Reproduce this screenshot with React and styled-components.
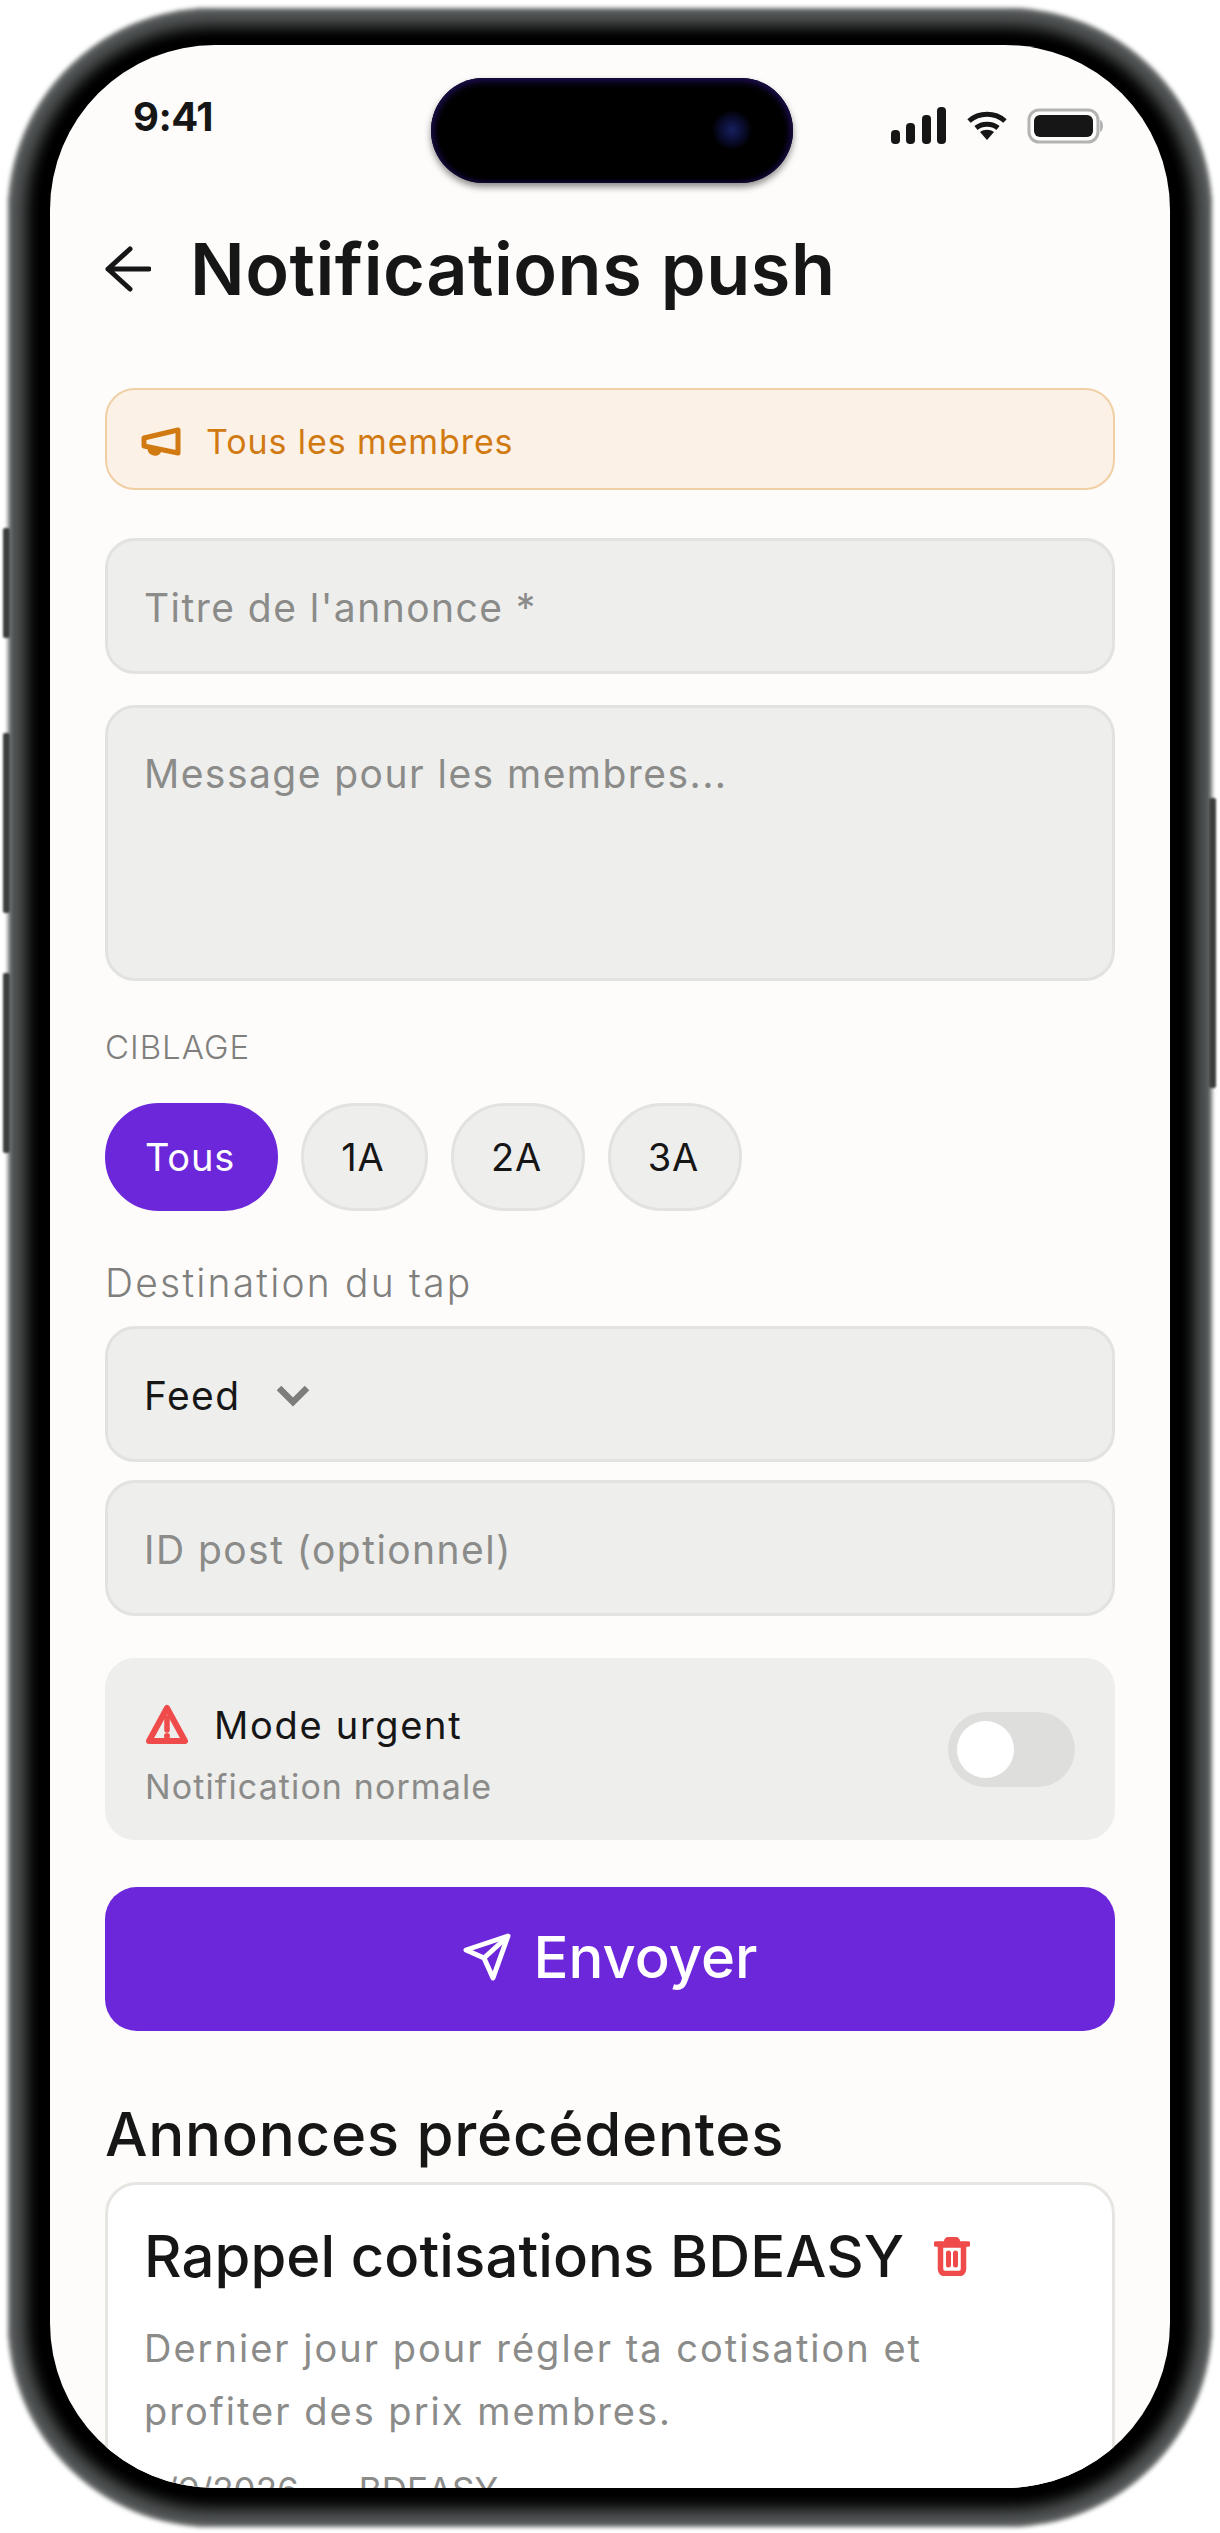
import React from "react";
import styled, { createGlobalStyle } from "styled-components";

const GlobalStyle = createGlobalStyle`
  html, body { margin: 0; padding: 0; background: #fff; }
  body { font-family: "Inter", "Liberation Sans", sans-serif; }
  #root { width: 1220px; height: 2533px; overflow: hidden; }
`;

const Stage = styled.div`
  width: 1220px;
  height: 2533px;
  padding: 8px;
  box-sizing: border-box;
`;

const Phone = styled.div`
  position: relative;
  width: 1204px;
  height: 2519px;
  box-sizing: border-box;
  padding: 37px 42px 39px 42px;
  border-radius: 205px;

  &::before {
    content: "";
    position: absolute;
    inset: 0;
    border-radius: 205px;
    background: #000;
    box-shadow: inset 0 0 0 4px #676a6a, inset 0 0 14px 18px #525555;
    filter: blur(2px);
  }
`;

const SideKey = styled.span`
  position: absolute;
  top: ${(p) => p.$top}px;
  ${(p) => (p.$right ? "right: -4px;" : "left: -5px;")}
  width: 7px;
  height: ${(p) => p.$height}px;
  border-radius: 2px;
  background: #3c3e3e;
  filter: blur(1px);
`;

const Screen = styled.div`
  position: relative;
  height: 100%;
  overflow: hidden;
  border-radius: 165px;
  background: #fdfcfa;
  box-shadow: 0 0 7px 2px rgba(0, 0, 0, 0.55);
  display: flex;
  flex-direction: column;
`;

const Island = styled.div`
  position: absolute;
  top: 33px;
  left: 381px;
  width: 362px;
  height: 105px;
  border-radius: 53px;
  background: #000;
  box-shadow: inset 0 3px 8px #1d0f4a, inset 3px 0 6px #150a38, inset -3px 0 6px #150a38, 0 4px 7px rgba(0, 0, 0, 0.45);
`;

const Camera = styled.span`
  position: absolute;
  top: 32px;
  right: 41px;
  width: 40px;
  height: 40px;
  border-radius: 50%;
  background: radial-gradient(circle, #16205e 0%, #0b0d30 40%, #000 72%);
`;

const StatusBar = styled.div`
  height: 116px;
  flex: none;
  box-sizing: border-box;
  padding: 48px 65px 0 83px;
  display: flex;
  justify-content: space-between;
  align-items: flex-start;
`;

const Clock = styled.span`
  font-size: 40px;
  line-height: 48px;
  font-weight: 700;
  color: #161616;
  letter-spacing: -0.5px;
`;

const StatusIcons = styled.div`
  margin-top: 14px;
  display: flex;
  align-items: center;
  gap: 20px;
`;

const Content = styled.div`
  padding: 0 55px;
  display: flex;
  flex-direction: column;
`;

const Header = styled.div`
  height: 76px;
  margin-top: 70px;
  display: flex;
  align-items: center;
  gap: 39px;
`;

const Title = styled.h1`
  margin: 0;
  font-size: 72px;
  line-height: 76px;
  font-weight: 600;
  letter-spacing: 0.5px;
  color: #161616;
`;

const Banner = styled.div`
  height: 102px;
  margin-top: 81px;
  box-sizing: border-box;
  padding: 5px 34px 0;
  display: flex;
  align-items: center;
  gap: 25px;
  border: 2px solid #f0cfa4;
  border-radius: 30px;
  background: #fbf1e6;
  font-size: 34px;
  letter-spacing: 0.9px;
  color: #d17a12;
`;

const Field = styled.div`
  height: ${(p) => p.$height || 136}px;
  margin-top: ${(p) => p.$gap || 0}px;
  box-sizing: border-box;
  padding: ${(p) => (p.$multi ? "44px" : "3px")} 36px 0;
  display: flex;
  align-items: ${(p) => (p.$multi ? "flex-start" : "center")};
  gap: 35px;
  border: 3px solid #e2e2e0;
  border-radius: 30px;
  background: #eeeeed;
  font-size: 39px;
  line-height: 44px;
  letter-spacing: 1.45px;
  color: ${(p) => (p.$filled ? "#161616" : "#8b8b89")};
`;

const Caption = styled.div`
  margin-top: ${(p) => p.$gap}px;
  font-size: ${(p) => p.$size}px;
  line-height: ${(p) => p.$size + 6}px;
  font-weight: 300;
  color: #7f7f7d;
  letter-spacing: ${(p) => p.$spacing}px;
`;

const Chips = styled.div`
  margin-top: 36px;
  display: flex;
  gap: 23px;
`;

const Chip = styled.div`
  height: 108px;
  width: ${(p) => p.$width}px;
  box-sizing: border-box;
  padding-right: 3px;
  display: flex;
  align-items: center;
  justify-content: center;
  border-radius: 54px;
  border: 3px solid ${(p) => (p.$active ? "#6b27d9" : "#e2e2e0")};
  background: ${(p) => (p.$active ? "#6b27d9" : "#eeeeed")};
  color: ${(p) => (p.$active ? "#fff" : "#161616")};
  font-size: 38px;
  letter-spacing: 0.8px;
`;

const UrgentCard = styled.div`
  height: 182px;
  margin-top: 42px;
  box-sizing: border-box;
  padding: 0 40px;
  display: flex;
  align-items: center;
  justify-content: space-between;
  border-radius: 30px;
  background: #eeeeed;
`;

const UrgentText = styled.div`
  padding-top: 10px;
`;

const UrgentTop = styled.div`
  display: flex;
  align-items: center;
  gap: 25px;
  font-size: 38px;
  line-height: 46px;
  color: #161616;
  letter-spacing: 1.7px;
`;

const UrgentSub = styled.div`
  margin-top: 19px;
  font-size: 34px;
  line-height: 40px;
  letter-spacing: 1.1px;
  color: #8b8b89;
`;

const Toggle = styled.div`
  width: 127px;
  height: 75px;
  box-sizing: border-box;
  padding: 9px;
  border-radius: 38px;
  background: #dededd;
`;

const Knob = styled.div`
  width: 57px;
  height: 57px;
  border-radius: 50%;
  background: #fff;
`;

const SendButton = styled.div`
  height: 144px;
  margin-top: 47px;
  box-sizing: border-box;
  padding-bottom: 5px;
  display: flex;
  align-items: center;
  justify-content: center;
  gap: 23px;
  border-radius: 32px;
  background: #6b27d9;
  color: #fff;
  font-size: 58px;
  font-weight: 500;
`;

const SectionTitle = styled.h2`
  margin: 69px 0 0;
  font-size: 60px;
  line-height: 68px;
  font-weight: 500;
  letter-spacing: 0.7px;
  color: #161616;
`;

const PostCard = styled.div`
  margin-top: 14px;
  box-sizing: border-box;
  padding: 35px 36px 40px;
  border: 3px solid #e6e5e2;
  border-radius: 32px;
  background: #fff;
`;

const PostHead = styled.div`
  display: flex;
  align-items: center;
  gap: 30px;
`;

const PostTitle = styled.div`
  font-size: 58px;
  line-height: 72px;
  font-weight: 500;
  letter-spacing: 0.1px;
  color: #161616;
`;

const PostBody = styled.p`
  max-width: 850px;
  margin: 25px 0 0;
  font-size: 38px;
  line-height: 63px;
  letter-spacing: 2px;
  color: #8b8b89;
`;

const PostMeta = styled.div`
  margin-top: 24px;
  display: flex;
  gap: 60px;
  font-size: 35px;
  line-height: 46px;
  color: #8b8b89;
`;

const Signal = () => (
  <svg width="56" height="38" viewBox="0 0 56 38" fill="#161616">
    <rect x="0" y="23" width="9" height="14" rx="4" />
    <rect x="15" y="16" width="9" height="21" rx="4" />
    <rect x="31" y="8" width="9" height="29" rx="4" />
    <rect x="46" y="0" width="9" height="37" rx="4" />
  </svg>
);

const Wifi = () => (
  <svg width="40" height="30" viewBox="0 0 40 30" fill="none" stroke="#161616" strokeWidth="5">
    <path d="M2 10C12 1 28 1 38 10" />
    <path d="M9 17C15 12 25 12 31 17" />
    <path d="M13 21L20 29L27 21C23 18 17 18 13 21Z" fill="#161616" stroke="none" />
  </svg>
);

const Battery = () => (
  <svg width="78" height="36" viewBox="0 0 78 36">
    <rect x="2" y="2" width="69" height="32" rx="10" fill="none" stroke="#b3b3b3" strokeWidth="3" />
    <rect x="7" y="7" width="59" height="22" rx="6" fill="#161616" />
    <path d="M73 12C77 13 77 23 73 24Z" fill="#b3b3b3" />
  </svg>
);

const BackArrow = () => (
  <svg width="46" height="46" viewBox="0 0 46 46" fill="none" stroke="#161616" strokeWidth="5" strokeLinecap="round" strokeLinejoin="round">
    <path d="M25 3L3 23L25 43M3 23H44" />
  </svg>
);

const Megaphone = () => (
  <svg width="40" height="30" viewBox="0 0 40 30" fill="none" stroke="#d17a12" strokeWidth="5" strokeLinejoin="round">
    <path d="M37 3V26L3 19V11Z" />
    <path d="M8 21C8 28 17 29 19 24" fill="#d17a12" strokeWidth="3" />
  </svg>
);

const Warning = () => (
  <svg width="44" height="44" viewBox="0 0 44 44" fill="none">
    <path d="M22 5L40 38H4Z" stroke="#ef4b4b" strokeWidth="6" strokeLinejoin="round" />
    <path d="M22 15V27" stroke="#ef4b4b" strokeWidth="5.5" strokeLinecap="round" />
    <circle cx="22" cy="33" r="3" fill="#ef4b4b" />
  </svg>
);

const SendIcon = () => (
  <svg width="48" height="48" viewBox="0 0 48 48" fill="none" stroke="#fff" strokeWidth="5" strokeLinejoin="round">
    <path d="M45 3L3 17L21 25L30 45Z" />
    <path d="M43 5L21 25" />
  </svg>
);

const Trash = () => (
  <svg width="36" height="40" viewBox="0 0 36 40" fill="none">
    <path d="M2 8H34" stroke="#ef4b4b" strokeWidth="5.5" strokeLinecap="round" />
    <path d="M10 8V5C10 3 12 1 14 1H22C24 1 26 3 26 5V8Z" fill="#ef4b4b" />
    <path d="M6.5 9H29.5V33C29.5 36 27.5 37.5 25 37.5H11C8.5 37.5 6.5 36 6.5 33Z" stroke="#ef4b4b" strokeWidth="5.5" />
    <path d="M14.5 17V29M21.5 17V29" stroke="#ef4b4b" strokeWidth="5" strokeLinecap="round" />
  </svg>
);

const Chevron = () => (
  <svg width="34" height="22" viewBox="0 0 34 22" fill="none" stroke="#7d7d7b" strokeWidth="6.5">
    <path d="M3 3L17 17L31 3" />
  </svg>
);

export default function App() {
  return (
    <Stage>
      <GlobalStyle />
      <Phone>
        <SideKey $top={520} $height={110} />
        <SideKey $top={725} $height={180} />
        <SideKey $top={965} $height={180} />
        <SideKey $right $top={790} $height={290} />
        <Screen>
          <Island>
            <Camera />
          </Island>
          <StatusBar>
            <Clock>9:41</Clock>
            <StatusIcons>
              <Signal />
              <Wifi />
              <Battery />
            </StatusIcons>
          </StatusBar>
          <Content>
            <Header>
              <BackArrow />
              <Title>Notifications push</Title>
            </Header>
            <Banner>
              <Megaphone />
              Tous les membres
            </Banner>
            <Field $gap={48}>Titre de l'annonce *</Field>
            <Field $gap={31} $height={276} $multi>Message pour les membres...</Field>
            <Caption $gap={47} $size={33} $spacing={1}>CIBLAGE</Caption>
            <Chips>
              <Chip $active $width={173}>Tous</Chip>
              <Chip $width={127}>1A</Chip>
              <Chip $width={134}>2A</Chip>
              <Chip $width={134}>3A</Chip>
            </Chips>
            <Caption $gap={49} $size={39} $spacing={2.2}>Destination du tap</Caption>
            <Field $gap={21} $filled>
              Feed
              <Chevron />
            </Field>
            <Field $gap={18}>ID post (optionnel)</Field>
            <UrgentCard>
              <UrgentText>
                <UrgentTop>
                  <Warning />
                  Mode urgent
                </UrgentTop>
                <UrgentSub>Notification normale</UrgentSub>
              </UrgentText>
              <Toggle>
                <Knob />
              </Toggle>
            </UrgentCard>
            <SendButton>
              <SendIcon />
              Envoyer
            </SendButton>
            <SectionTitle>Annonces précédentes</SectionTitle>
            <PostCard>
              <PostHead>
                <PostTitle>Rappel cotisations BDEASY</PostTitle>
                <Trash />
              </PostHead>
              <PostBody>Dernier jour pour régler ta cotisation et profiter des prix membres.</PostBody>
              <PostMeta>
                <span>2/9/2026</span>
                <span>BDEASY</span>
              </PostMeta>
            </PostCard>
          </Content>
        </Screen>
      </Phone>
    </Stage>
  );
}
